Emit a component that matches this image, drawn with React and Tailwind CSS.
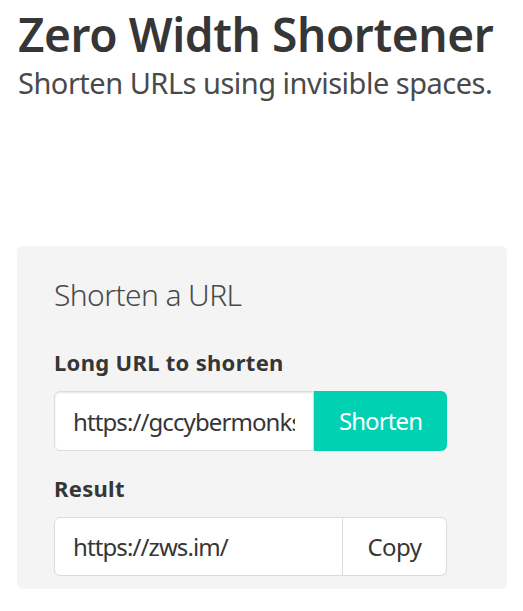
import React, { useState } from 'react';

const App = () => {
  const [longUrl, setLongUrl] = useState('https://gccybermonks.com/');
  const [result] = useState('https://zws.im/');

  return (
    <div
      className="min-h-screen bg-white pl-[18px] pt-[7px] text-[#363636]"
      style={{ fontFamily: '"Noto Sans", "Open Sans", sans-serif' }}
    >
      {/* Header */}
      <h1 className="whitespace-nowrap text-[46px] leading-[54px] font-semibold tracking-[-0.4px] text-[#363636]">
        Zero Width Shortener
      </h1>
      <p className="mt-[4px] whitespace-nowrap text-[29px] leading-[36px] tracking-[-0.5px] text-[#4a4a4a]">
        Shorten URLs using invisible spaces.
      </p>

      {/* Card */}
      <div className="mt-[145px] ml-[-1px] w-[490px] rounded-md bg-[#f4f4f4] pl-[37px] pt-[31px] pb-[13px]">
        <h2 className="text-[30px] leading-[36px] font-light tracking-[-0.6px] text-[#4a4a4a]">Shorten a URL</h2>

        <label className="mt-[34px] block text-[22px] leading-[30px] font-bold tracking-[0.3px] text-[#363636]">
          Long URL to shorten
        </label>
        <div className="mt-[14px] flex h-[60px] w-[393px]">
          <input
            type="text"
            value={longUrl}
            onChange={(e) => setLongUrl(e.target.value)}
            className="h-full w-[260px] rounded-l-md border border-[#dbdbdb] bg-white px-[18px] text-[24px] tracking-[-0.9px] text-[#363636] shadow-[inset_0_1px_2px_rgba(10,10,10,0.1)] outline-none"
          />
          <button className="h-full flex-1 rounded-r-md bg-[#00d1b2] text-[24px] tracking-[-0.9px] text-white">
            Shorten
          </button>
        </div>

        <label className="mt-[22px] block text-[22px] leading-[30px] font-bold tracking-[0.3px] text-[#363636]">
          Result
        </label>
        <div className="mt-[14px] flex h-[59px] w-[393px]">
          <input
            type="text"
            readOnly
            value={result}
            className="h-full w-[289px] rounded-l-md border border-[#dbdbdb] bg-white px-[18px] text-[24px] tracking-[-0.9px] text-[#363636] outline-none"
          />
          <button className="h-full flex-1 rounded-r-md border border-l-0 border-[#dbdbdb] bg-white text-[24px] tracking-[-0.5px] text-[#363636]">
            Copy
          </button>
        </div>
      </div>
    </div>
  );
};

export default App;
